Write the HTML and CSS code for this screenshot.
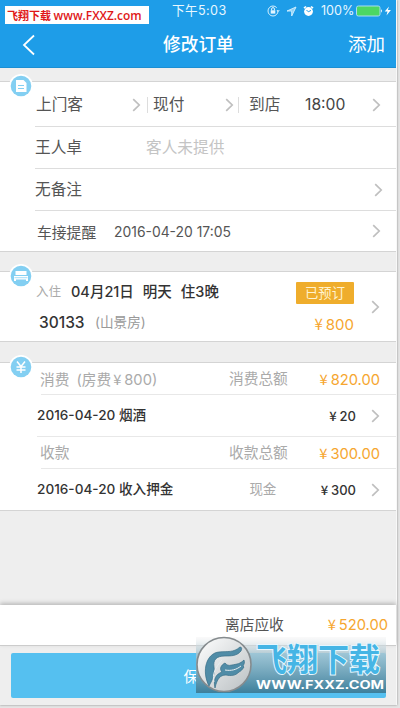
FILE: index.html
```html
<!DOCTYPE html>
<html lang="zh-CN">
<head>
<meta charset="utf-8">
<title>修改订单</title>
<link rel="stylesheet" href="styles.css">
</head>
<body>
<svg class="defs" width="0" height="0"><symbol id="chev" viewBox="0 0 9 14"><path d="M1.2 1.2 7.2 7 1.2 12.8" fill="none" stroke="currentColor" stroke-width="1.7"/></symbol></svg>
<div class="screen">
  <header class="top">
    <div class="status">
      <span class="clock">下午5:03</span>
      <svg class="s-lock" width="13" height="12" viewBox="0 0 13 12"><circle cx="6" cy="6" r="5" fill="none" stroke="#d5f0ff" stroke-width="1" stroke-dasharray="27 4"/><rect x="3.7" y="5.3" width="4.6" height="3.3" fill="#e4f5ff"/><path d="M4.6 5.4V4a1.4 1.4 0 0 1 2.8 0v1.4M10 5l1 1.5L12.3 5" fill="none" stroke="#e4f5ff"/></svg>
      <svg class="s-loc" width="11" height="11" viewBox="0 0 11 11"><path d="M10 1 1 5h4.7v5z" fill="#8fd0f5" stroke="#d5f0ff" stroke-width=".9"/></svg>
      <svg class="s-alarm" width="11" height="12" viewBox="0 0 11 12"><circle cx="5.5" cy="6.5" r="4.4" fill="#fff"/><path d="M1 3.2 3 1.5M10 3.2 8 1.5" stroke="#fff" stroke-width="1.6"/><path d="M3.5 5 5.3 6.8 8 5.4" fill="none" stroke="#1e9de8"/></svg>
      <span class="pct">100%</span>
      <svg class="s-bat" width="37" height="12" viewBox="0 0 37 12"><rect x=".5" y="1" width="23.5" height="10" rx="1.8" fill="#4cd763" stroke="#a8dcf2"/><path d="M25 4.3q1.800 1.500 0 3.400z" fill="#fff"/><path d="M33 1.500 28.700 6.400h2.800l-1 4.100 4.400-5.400h-3z" fill="#fff"/></svg>
    </div>
    <div class="nav">
      <svg class="back" width="14" height="22" viewBox="0 0 14 22"><path d="M12 1.500 2 11l10 9.500" fill="none" stroke="#fff" stroke-width="1.800"/></svg>
      <h1>修改订单</h1>
      <span class="add">添加</span>
    </div>
    <div class="site">飞翔下载 <b>www.FXXZ.com</b></div>
  </header>

  <section class="card guest">
    <svg class="badge" viewBox="0 0 24 24"><circle cx="12" cy="12" r="12" fill="#fff"/><circle cx="12" cy="12" r="10.300" fill="#83cff2"/><path d="M7 6h7.500l3 3v9H7z" fill="#fff"/><path d="M9 11.500h6M9 14.500h6" stroke="#83cff2"/></svg>
    <div class="row r-type"><span>上门客</span><svg class="chev"><use href="#chev"/></svg><span class="bar">现付</span><svg class="chev"><use href="#chev"/></svg><span class="bar arrive">到店</span><span class="time">18:00</span><svg class="chev"><use href="#chev"/></svg></div>
    <div class="row r-name"><span>王人卓</span><span class="hint">客人未提供</span></div>
    <div class="row r-note"><span>无备注</span><svg class="chev"><use href="#chev"/></svg></div>
    <div class="row r-car"><span class="car">车接提醒</span><span class="stamp">2016-04-20 17:05</span><svg class="chev"><use href="#chev"/></svg></div>
  </section>

  <section class="card room">
    <svg class="badge" viewBox="0 0 24 24"><circle cx="12" cy="12" r="12" fill="#fff"/><circle cx="12" cy="12" r="10.300" fill="#83cff2"/><path d="M6.500 7h11v4h-11zM5 12h14v5h-2v-1.500H7V17H5z" fill="#fff"/><path d="M5.500 13.700h13" stroke="#83cff2" stroke-width=".7"/></svg>
    <div class="stay">
      <div class="line1"><span class="in">入住</span><span class="date">04月21日</span><span class="date">明天</span><span class="date">住3晚</span></div>
      <div class="line2"><span class="no">30133</span><span class="kind">(山景房)</span></div>
    </div>
    <div class="price"><span class="tag">已预订</span><span class="orange"><i>¥</i>800</span></div>
    <svg class="chev"><use href="#chev"/></svg>
  </section>

  <section class="card ledger">
    <svg class="badge" viewBox="0 0 24 24"><circle cx="12" cy="12" r="12" fill="#fff"/><circle cx="12" cy="12" r="10.300" fill="#83cff2"/><path d="M8 6.500l4 5 4-5M12 11.500V18M7.500 12h9M7.500 15h9" fill="none" stroke="#fff" stroke-width="1.500"/></svg>
    <div class="sum"><span class="left">消费<em>(房费<i>¥</i>800)</em></span><span class="total">消费总额</span><span class="orange"><i>¥</i>820.00</span></div>
    <div class="item"><span class="what">2016-04-20 烟酒</span><span class="amt"><i>¥</i>20</span><svg class="chev"><use href="#chev"/></svg></div>
    <div class="sum second"><span class="left">收款</span><span class="total">收款总额</span><span class="orange"><i>¥</i>300.00</span></div>
    <div class="item last"><span class="what">2016-04-20 收入押金</span><span class="cash">现金</span><span class="amt"><i>¥</i>300</span><svg class="chev"><use href="#chev"/></svg></div>
  </section>

  <footer class="bottom">
    <div class="due"><span>离店应收</span><span class="orange"><i>¥</i>520.00</span></div>
    <div class="save-wrap"><button class="save">保存</button></div>
    <svg class="mark" width="192" height="58" viewBox="0 0 192 58">
      <defs>
        <linearGradient id="shade" x2="0" y2="1"><stop offset="0" stop-color="#eee" stop-opacity=".3"/><stop offset=".3" stop-color="#a9c5d0" stop-opacity=".85"/><stop offset="1" stop-color="#3d7f9b"/></linearGradient>
        <linearGradient id="disc" x2="1" y2="1"><stop offset="0" stop-color="#fff"/><stop offset="1" stop-color="#b9bfc2"/></linearGradient>
      </defs>
      <rect x="1" y="1" width="190" height="56" fill="url(#shade)"/>
      <circle cx="29" cy="28.500" r="27" fill="url(#disc)" stroke="#858b8e" stroke-width="1.600"/>
      <path d="M14 50C6 34 12 17 24 16c9-1 14 1 21-5 2 0 2 2 1 4-4 5-10 5-16 5-9 0-12 4-11 11 1 6-1 12-5 19z" fill="#508ca7" stroke="#386e86" stroke-width=".7"/>
      <path d="M20 52c-2-9 1-14 7-16-3-3-1-7 3-9 2 2 3 3 7 2 5-1 8-1 12-5 1 3 0 4-1 6l1 1c-2 3-3 4-5 5-4 4-8 4-13 3-6 0-9 4-11 13z" fill="#508ca7" stroke="#386e86" stroke-width=".7"/>
      <path d="M19 46c-2-8 1-14 8-22M30 34c6 1 11 0 16-4" fill="none" stroke="#e8edef" stroke-width="1"/>
      <text class="mark-name" x="61" y="35" textLength="124" lengthAdjust="spacingAndGlyphs">飞翔下载</text>
      <text class="mark-url" x="61" y="53" textLength="128" lengthAdjust="spacingAndGlyphs">WWW.FXXZ.COM</text>
    </svg>
  </footer>
</div>
</body>
</html>
```

FILE: styles.css
```css
* { box-sizing: border-box; }
body {
  margin: 0;
  height: 708px;
  overflow: hidden;
  background: #e4e4e4;
  font-family: Inter, "Noto Sans CJK SC", sans-serif;
  font-size: 15.700px;
  line-height: 1;
  color: #555;
}
.defs { position: absolute; }
.screen {
  width: 397px;
  height: 705px;
  display: flex;
  flex-direction: column;
  background: #eee;
  border-right: 1px solid #f8f8f8;
  box-shadow: 0 0 2px #888;
}
i { font-style: normal; font-family: "Noto Sans CJK SC", sans-serif; margin: 0 3px 0 2px; }
span { white-space: nowrap; }

.top {
  position: relative;
  height: 68px;
  flex: none;
  background: #1e9de8;
  border-bottom: 1px solid #1b8fd3;
  color: #fff;
}
.status { height: 22px; display: flex; align-items: center; padding-left: 172px; font-size: 12.600px; color: #e8f7ff; }
.clock { width: 95px; letter-spacing: .4px; }
.s-loc { margin-left: 6px; }
.s-alarm { margin-left: 6px; }
.pct { margin-left: 7px; width: 35px; }
.nav { height: 45px; display: grid; grid-template-columns: 22px 140px 186px auto; align-items: center; }
.back { grid-column: 2; }
h1 { margin: 0; grid-column: 3; padding-left: 1px; font-size: 17.700px; font-weight: 500; line-height: 1; }
.back, h1, .add { grid-row: 1; }
.add { grid-column: 4; font-size: 18.500px; }
.site {
  position: absolute;
  left: 5px;
  top: 6px;
  width: 144px;
  height: 18px;
  padding-left: 2px;
  background: #fff;
  color: #e01818;
  font: bold 11px/18px "Noto Sans CJK SC", sans-serif;
  white-space: nowrap;
}
.site b { font: 600 11.900px/18px "Open Sans", sans-serif; }

.card { position: relative; background: #fff; border: solid #d4d4d4; border-width: 1px 0; flex: none; }
.badge { position: absolute; left: 9px; top: -8px; width: 24px; height: 24px; }
.chev { width: 9px; height: 14px; color: #bfbfbf; }

.guest { margin-top: 13px; height: 171px; }
.row { margin-left: 35px; display: grid; align-items: center; border-bottom: 1px solid #ddd; }
.r-type { height: 45px; padding: 2px 0 0 1px; grid-template-columns: 96px 21px 72px 24px 56px 67px 9px; }
.bar { position: relative; }
.bar::before { content: ""; position: absolute; left: -6px; top: 0; height: 16px; border-left: 1px solid #ddd; }
.arrive::before { left: -11px; }
.time { color: #444; }
.r-name { height: 42px; grid-template-columns: 111px auto; }
.hint { color: #c4c4c4; }
.r-note { height: 42px; grid-template-columns: 339px 9px; }
.r-car { height: 40px; padding-left: 2px; border: 0; grid-template-columns: 77px 258px 9px; }
.car { font-size: 14.800px; padding-top: 4px; }
.stamp { font-size: 13.900px; padding-top: 4px; }

.room { margin-top: 19px; height: 71px; display: grid; grid-template-columns: 251px 103px 17px 9px; align-items: center; }
.stay { padding-left: 36px; }
.line1, .line2 { display: flex; align-items: center; }
.line1 { height: 28px; margin-top: 5px; }
.in { width: 35px; font-size: 12.500px; color: #aaa; }
.date { font-size: 14.500px; font-weight: 500; color: #333; margin-right: 9px; }
.line2 { height: 34px; padding-left: 3px; }
.no { width: 56px; font-size: 15.500px; font-weight: 500; color: #333; }
.kind { font-size: 13.600px; color: #999; }
.price { display: flex; flex-direction: column; align-items: flex-end; justify-content: space-between; height: 50px; }
.tag { width: 58px; height: 22px; background: #efad2c; color: #fff3d0; border-radius: 1px; font-size: 13.300px; line-height: 22px; text-align: center; }
.price .orange { font-size: 15px; }
.orange { color: #f6a62f; }
.room .chev { grid-column: 4; }

.ledger { margin-top: 20px; height: 149px; }
.sum, .item { display: flex; align-items: center; margin-left: 41px; border-bottom: 1px solid #e8e8e8; }
.sum { height: 32px; color: #aaa; font-size: 14.700px; padding-top: 2px; }
.left { width: 189px; margin-left: -1px; }
.left em { font-style: normal; margin-left: 7px; }
.total { flex: none; }
.sum .orange { margin-left: auto; margin-right: 16px; }
.item { height: 42px; margin-left: 37px; font-size: 13.600px; font-weight: 500; color: #333; }
.item .chev { margin: 0 16px 0 15px; }
.amt { margin-left: auto; font-size: 13px; }
.cash { font-size: 13.500px; font-weight: 400; color: #aaa; margin-left: 76px; }
.last { border: 0; height: 41px; }

.bottom { position: relative; margin-top: auto; flex: none; height: 100px; }
.due { height: 41px; display: flex; align-items: center; padding-left: 225px; background: #fff; border-bottom: 1px solid #ccc; box-shadow: 0 -2px 4px #bbb; font-size: 14.700px; }
.due .orange { margin-left: auto; margin-right: 8px; }
.save-wrap { padding: 7px 10px 0 11px; }
.save { display: block; width: 100%; height: 45px; border: 0; border-radius: 2px; background: #55c0f0; color: #fff; font: 15px/45px "Noto Sans CJK SC", sans-serif; padding: 0; }
.mark { position: absolute; left: 195px; top: 31px; }
.mark-name { font: bold 32px "Noto Sans CJK SC", sans-serif; fill: #45b5e5; stroke: #e6f7ff; stroke-width: 2px; paint-order: stroke; }
.mark-url { font: bold 12px Inter, sans-serif; fill: #fff; }
```
